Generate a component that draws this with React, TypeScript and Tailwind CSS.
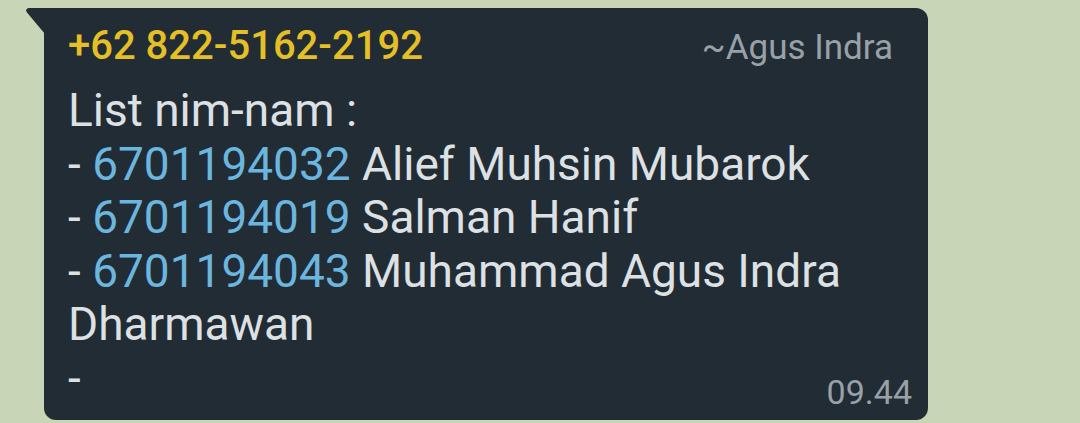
import React from "react";

export default function App() {
  const rows: [string, string][] = [
    ["6701194032", "Alief Muhsin Mubarok"],
    ["6701194019", "Salman Hanif"],
    ["6701194043", "Muhammad Agus Indra Dharmawan"],
  ];
  return (
    <div
      className="w-[1080px] h-[423px] overflow-hidden bg-[#c9d5b7] pt-[8px] pl-[44px]"
      style={{ fontFamily: "Roboto, 'Noto Sans', sans-serif" }}
    >
      <div className="relative w-[884px] h-[412px] bg-[#222c35] rounded-tr-[12px] rounded-b-[12px] pl-[24px] pr-[16px] pt-[15px] flex flex-col">
        <svg
          className="absolute left-[-18px] top-0"
          width="19"
          height="26"
          viewBox="0 0 19 26"
        >
          <path d="M3 0 L19 0 L19 26 L1.2 4.8 Q-0.8 2.2 1 0.8 Q1.8 0 3 0 Z" fill="#222c35" />
        </svg>
        <div className="flex items-baseline justify-between pr-[19px]">
          <span className="text-[40px] leading-[46px] font-medium text-[#e4bf26]">
            +62 822-5162-2192
          </span>
          <span className="text-[35px] leading-[46px] text-[#98a1a8]">~Agus Indra</span>
        </div>
        <div className="mt-[13px] text-[46px] leading-[53.5px] text-[#dde1e4] w-[800px]">
          <div>List nim-nam :</div>
          {rows.map(([n, name]) => (
            <div key={n}>
              - <span className="text-[#6bb6df]">{n}</span> {name}
            </div>
          ))}
          <div className="flex items-end justify-between w-[844px]">
            <span>-</span>
            <span className="text-[34px] leading-[26px] text-[#98a1a8]">09.44</span>
          </div>
        </div>
      </div>
    </div>
  );
}
